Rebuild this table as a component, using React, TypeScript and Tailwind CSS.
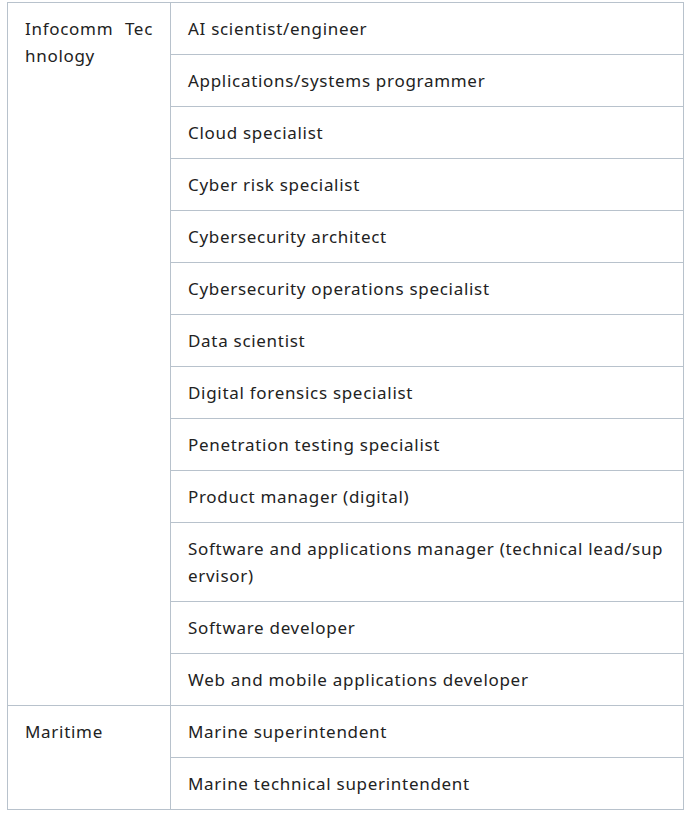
const groups = [
  {
    sector: "Infocomm Technology",
    jobs: [
      "AI scientist/engineer",
      "Applications/systems programmer",
      "Cloud specialist",
      "Cyber risk specialist",
      "Cybersecurity architect",
      "Cybersecurity operations specialist",
      "Data scientist",
      "Digital forensics specialist",
      "Penetration testing specialist",
      "Product manager (digital)",
      "Software and applications manager (technical lead/supervisor)",
      "Software developer",
      "Web and mobile applications developer",
    ],
  },
  {
    sector: "Maritime",
    jobs: ["Marine superintendent", "Marine technical superintendent"],
  },
];

export default function App() {
  return (
    <div className="min-h-screen bg-white pt-[2px] pl-[7px] font-['Noto_Sans',sans-serif] text-[17px] leading-[27px] tracking-[0.7px] text-[#222]">
      <table className="w-[677px] border-collapse">
        <tbody>
          {groups.map((g) =>
            g.jobs.map((job, i) => (
              <tr key={job}>
                {i === 0 && (
                  <td
                    rowSpan={g.jobs.length}
                    className="w-[163px] border border-[#b8c2cc] px-[17px] py-[12px] align-top text-justify break-all"
                  >
                    {g.sector}
                  </td>
                )}
                <td className="border border-[#b8c2cc] px-[17px] py-[12px] align-top break-all">
                  {job}
                </td>
              </tr>
            ))
          )}
        </tbody>
      </table>
    </div>
  );
}
